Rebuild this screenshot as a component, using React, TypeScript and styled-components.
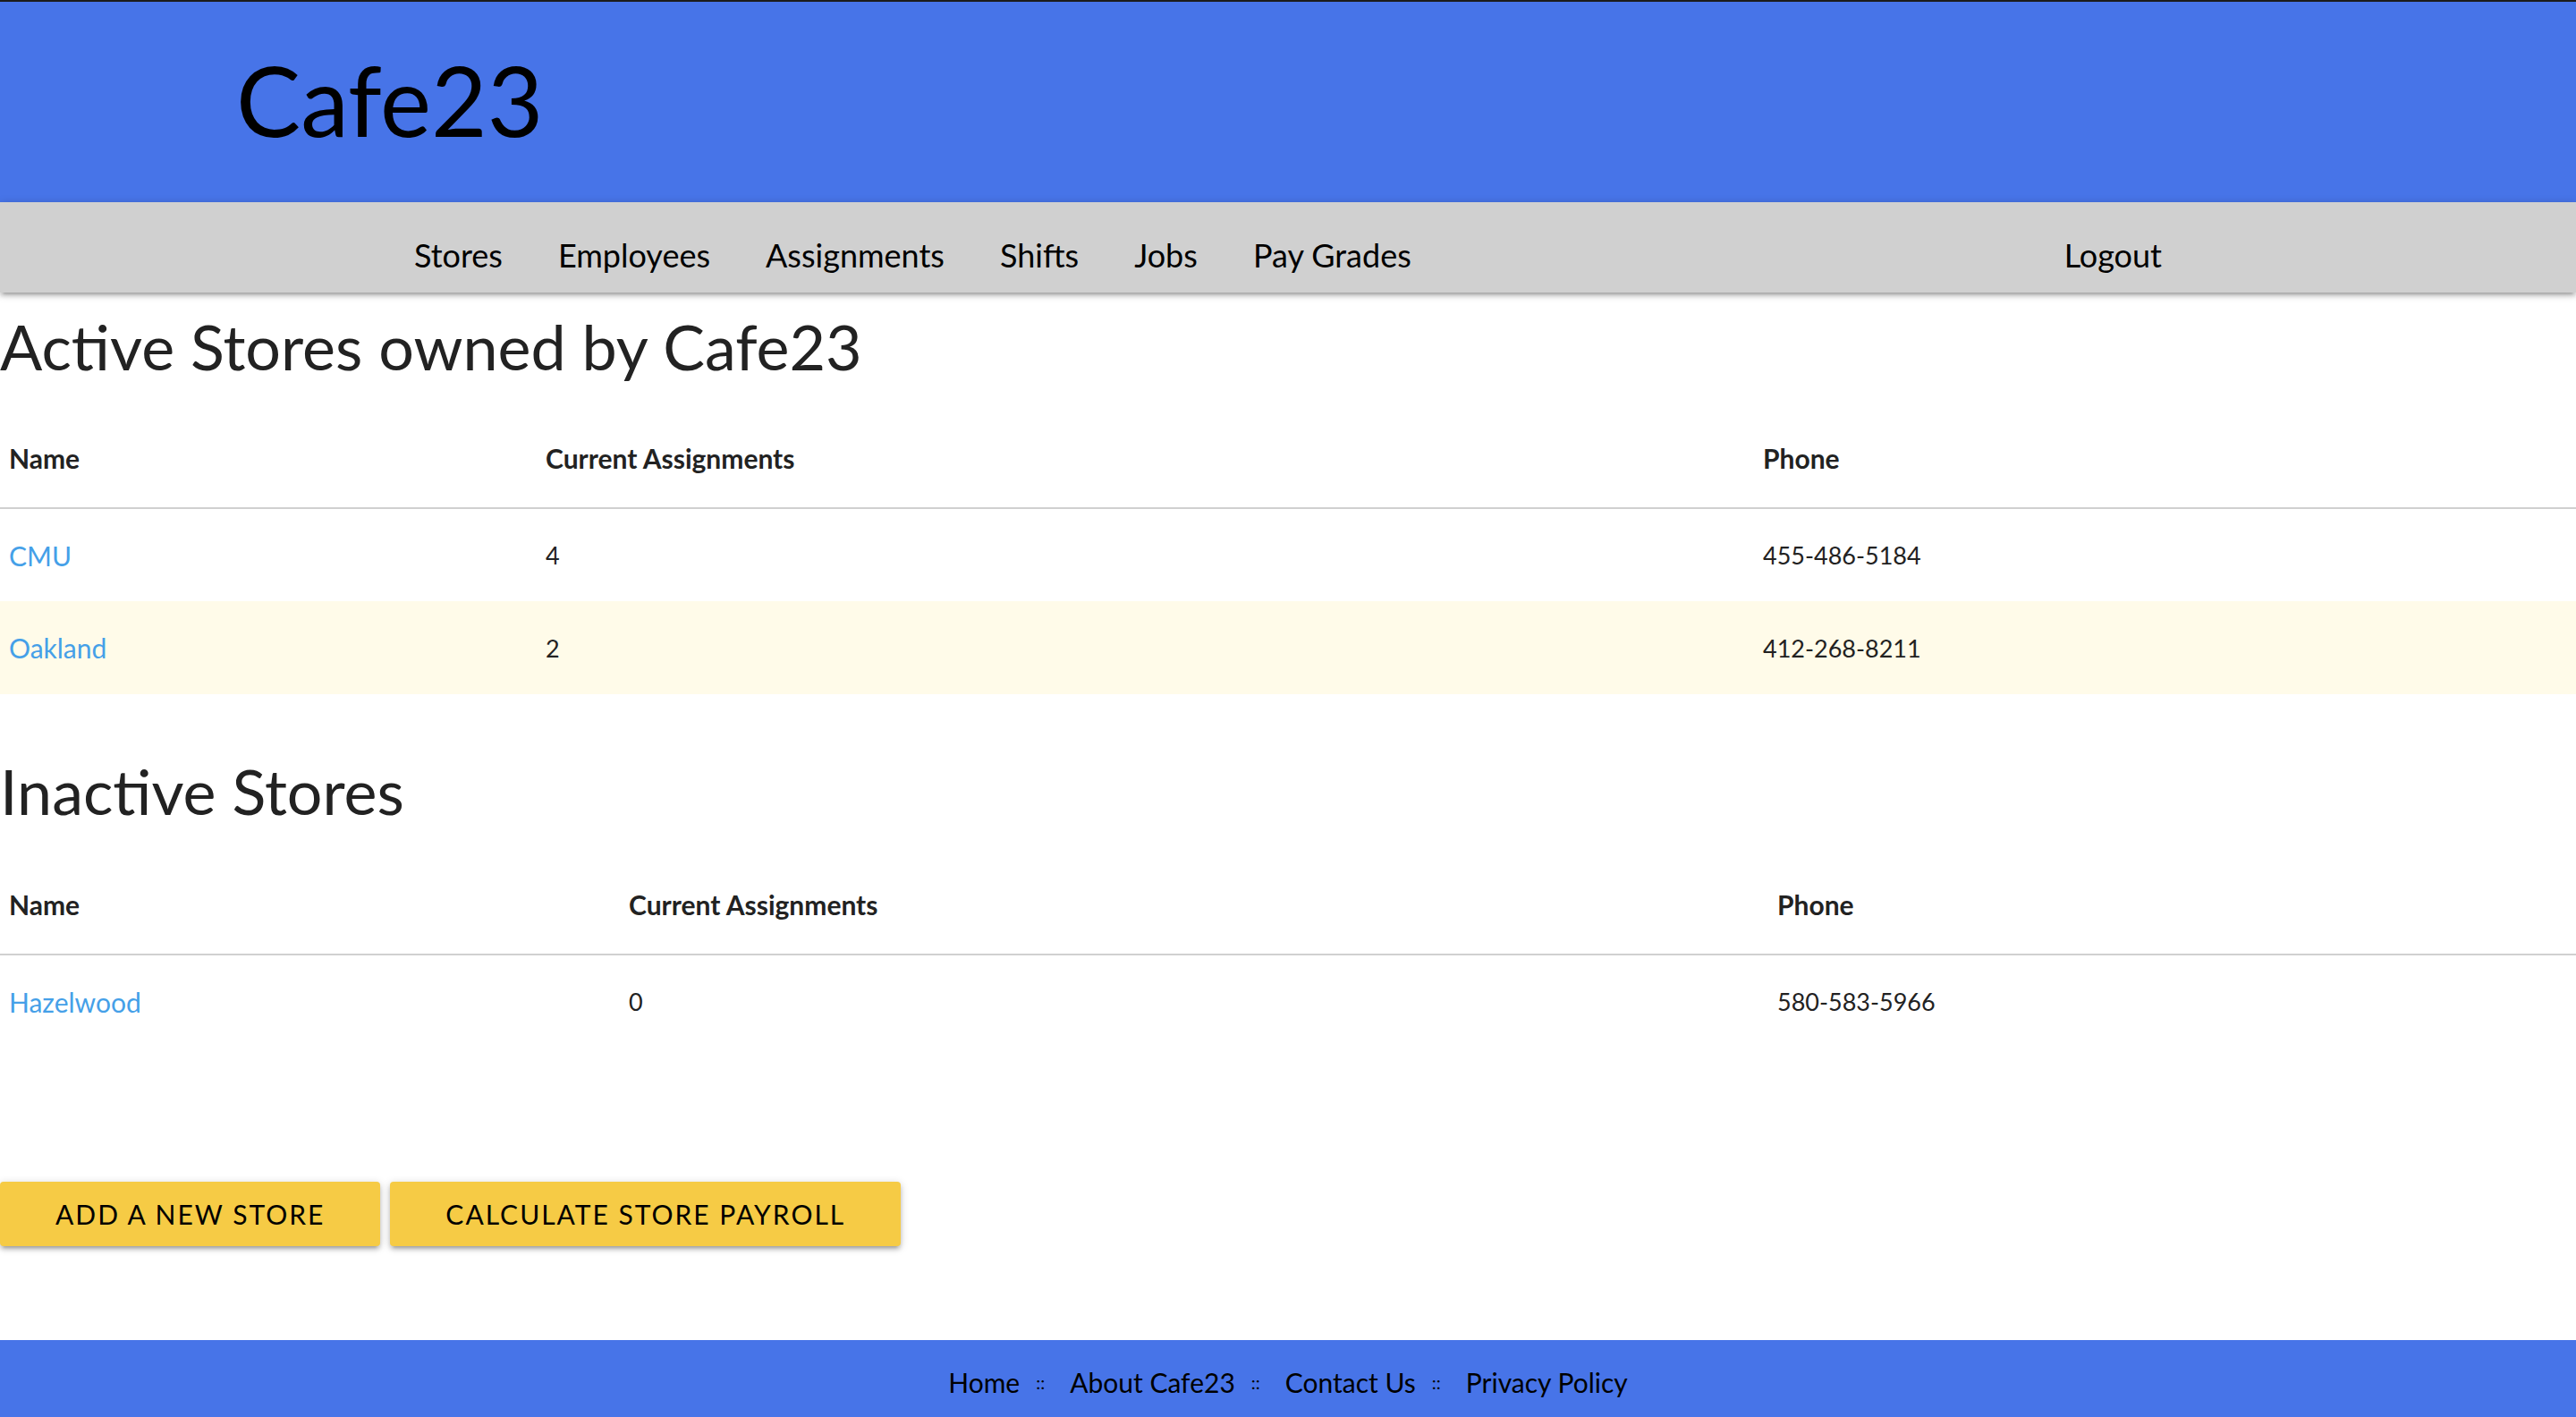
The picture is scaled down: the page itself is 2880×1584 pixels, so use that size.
import React from "react";
import styled, { createGlobalStyle } from "styled-components";

const Global = createGlobalStyle`
  html, body { margin: 0; padding: 0; background: #ffffff; }
  body {
    font-family: Lato, "Noto Sans", "Liberation Sans", sans-serif;
    color: rgba(0, 0, 0, 0.87);
  }
  * { box-sizing: border-box; }
`;

const Header = styled.header`
  height: 226px;
  background: #4774e8;
  border-top: 2px solid #1c1c1c;
  padding: 45px 0 0 264px;
`;

const Logo = styled.div`
  font-size: 108px;
  line-height: 1.2;
  font-weight: 400;
  color: #000;
`;

const NavBar = styled.nav`
  position: relative;
  z-index: 1;
  height: 101px;
  background: #d0d0d0;
  box-shadow: 0 4px 4px 0 rgba(0, 0, 0, 0.14), 0 6px 2px -4px rgba(0, 0, 0, 0.12),
    0 2px 10px 0 rgba(0, 0, 0, 0.2);
`;

const NavInner = styled.div`
  margin: 0 432px;
  height: 100%;
  display: flex;
  justify-content: space-between;
  padding-top: 37px;
`;

const NavList = styled.ul`
  list-style: none;
  margin: 0;
  padding: 0;
  display: flex;
`;

const NavLink = styled.a`
  display: block;
  padding: 0 31px;
  font-size: 36px;
  line-height: 44px;
  color: #000;
  text-decoration: none;
`;

const Main = styled.main`
  display: flex;
  flex-direction: column;
`;

const Title = styled.h3<{ $top: number }>`
  margin: ${(p) => p.$top}px 0 0;
  font-size: 70px;
  line-height: 84px;
  font-weight: 400;
  color: #222;
`;

const Table = styled.table<{ $top: number }>`
  margin-top: ${(p) => p.$top}px;
  width: 100%;
  border-collapse: collapse;
  table-layout: fixed;
`;

const Col = styled.col<{ $w?: number }>`
  width: ${(p) => (p.$w ? `${p.$w}px` : "auto")};
`;

const HeadRow = styled.tr`
  height: 106px;
  border-bottom: 2px solid #d0d0d0;
`;

const Th = styled.th`
  text-align: left;
  padding: 0 10px 6px;
  font-size: 30px;
  font-weight: 700;
  color: #222;
  vertical-align: middle;
`;

const Row = styled.tr<{ $alt?: boolean }>`
  height: 104px;
  background: ${(p) => (p.$alt ? "#fffbe9" : "transparent")};
`;

const Td = styled.td`
  padding: 0 10px;
  font-size: 27px;
  color: #222;
  vertical-align: middle;
`;

const StoreLink = styled.a`
  color: #45a0e8;
  text-decoration: none;
  font-size: 30px;
`;

const Buttons = styled.div`
  margin-top: 150px;
  display: flex;
  gap: 11px;
`;

const Button = styled.button`
  height: 72px;
  padding: 0 62px;
  border: none;
  border-radius: 4px;
  background: #f6cb45;
  color: #000;
  font-family: Lato, "Noto Sans", sans-serif;
  font-size: 30px;
  letter-spacing: 2px;
  text-transform: uppercase;
  box-shadow: 0 4px 4px 0 rgba(0, 0, 0, 0.14), 0 6px 2px -4px rgba(0, 0, 0, 0.12),
    0 2px 10px 0 rgba(0, 0, 0, 0.2);
  cursor: pointer;
`;

const Footer = styled.footer`
  margin-top: 105px;
  height: 120px;
  background: #4774e8;
  display: flex;
  justify-content: center;
  align-items: flex-start;
  padding-top: 29px;
`;

const FootLink = styled.a`
  font-size: 30px;
  line-height: 36px;
  color: #000;
  text-decoration: none;
`;

const Sep = styled.span`
  font-size: 20px;
  line-height: 36px;
  margin: 0 28px 0 18px;
  color: #000;
`;

type Store = { name: string; count: number; phone: string };

const active: Store[] = [
  { name: "CMU", count: 4, phone: "455-486-5184" },
  { name: "Oakland", count: 2, phone: "412-268-8211" },
];
const inactive: Store[] = [{ name: "Hazelwood", count: 0, phone: "580-583-5966" }];

function StoreTable({ stores, cols, top }: { stores: Store[]; cols: [number, number]; top: number }) {
  return (
    <Table $top={top}>
      <colgroup>
        <Col $w={cols[0]} />
        <Col $w={cols[1]} />
        <Col />
      </colgroup>
      <thead>
        <HeadRow>
          <Th>Name</Th>
          <Th>Current Assignments</Th>
          <Th>Phone</Th>
        </HeadRow>
      </thead>
      <tbody>
        {stores.map((s, i) => (
          <Row key={s.name} $alt={i % 2 === 1}>
            <Td>
              <StoreLink href="#">{s.name}</StoreLink>
            </Td>
            <Td>{s.count}</Td>
            <Td>{s.phone}</Td>
          </Row>
        ))}
      </tbody>
    </Table>
  );
}

export default function App() {
  const links = ["Stores", "Employees", "Assignments", "Shifts", "Jobs", "Pay Grades"];
  const foot = ["Home", "About Cafe23", "Contact Us", "Privacy Policy"];
  return (
    <>
      <Global />
      <Header>
        <Logo>Cafe23</Logo>
      </Header>
      <NavBar>
        <NavInner>
          <NavList>
            {links.map((l) => (
              <li key={l}>
                <NavLink href="#">{l}</NavLink>
              </li>
            ))}
          </NavList>
          <NavList>
            <li>
              <NavLink href="#">Logout</NavLink>
            </li>
          </NavList>
        </NavInner>
      </NavBar>
      <Main>
        <Title $top={18}>Active Stores owned by Cafe23</Title>
        <StoreTable stores={active} cols={[600, 1361]} top={33} />
        <Title $top={66}>Inactive Stores</Title>
        <StoreTable stores={inactive} cols={[693, 1284]} top={35} />
        <Buttons>
          <Button>Add a New Store</Button>
          <Button>Calculate Store Payroll</Button>
        </Buttons>
      </Main>
      <Footer>
        {foot.map((f, i) => (
          <React.Fragment key={f}>
            {i > 0 && <Sep>::</Sep>}
            <FootLink href="#">{f}</FootLink>
          </React.Fragment>
        ))}
      </Footer>
    </>
  );
}
